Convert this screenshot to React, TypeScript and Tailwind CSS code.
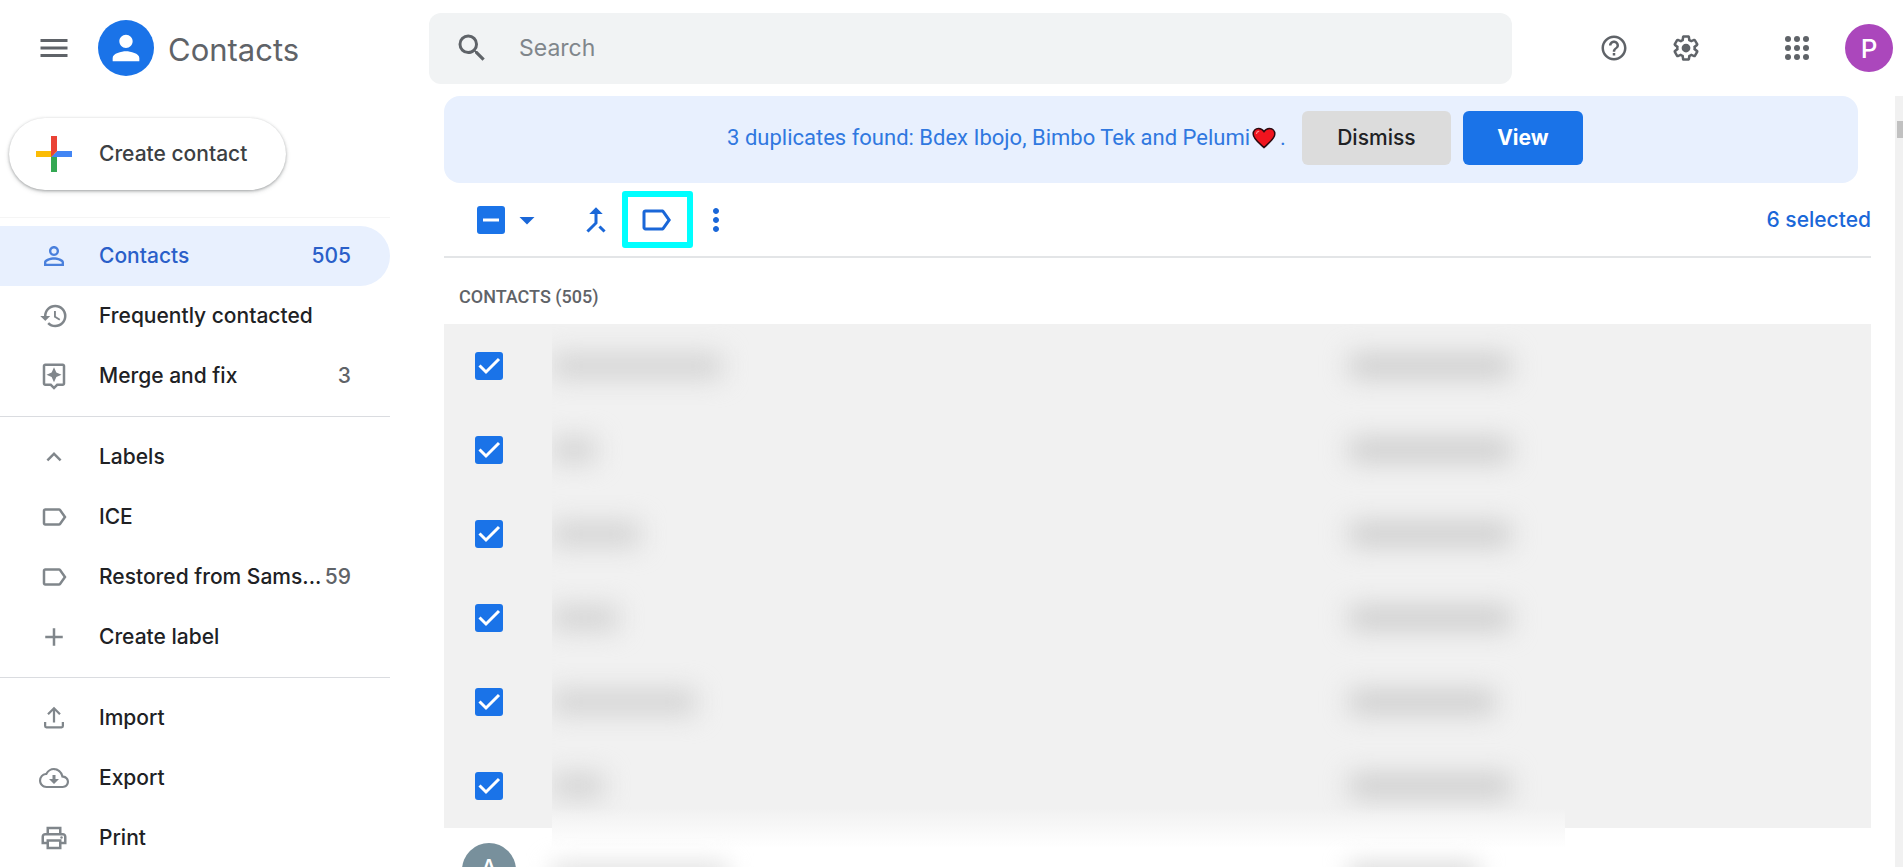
import type { ReactNode } from "react";
import {
  MdAdd,
  MdArrowDropDown,
  MdCallMerge,
  MdHelpOutline,
  MdHistory,
  MdKeyboardArrowUp,
  MdLabelOutline,
  MdMenu,
  MdMoreVert,
  MdOutlineAssistant,
  MdOutlinePrint,
  MdPerson,
  MdPersonOutline,
  MdSearch,
} from "react-icons/md";

type NavItemProps = {
  icon: ReactNode;
  label: string;
  count?: number;
  active?: boolean;
};

// widths of the hidden name / phone in each selected row
const contacts = [
  { id: 1, name: "w-[170px]", phone: "w-[162px]" },
  { id: 2, name: "w-[44px]", phone: "w-[162px]" },
  { id: 3, name: "w-[88px]", phone: "w-[162px]" },
  { id: 4, name: "w-[66px]", phone: "w-[162px]" },
  { id: 5, name: "w-[144px]", phone: "w-[146px]" },
  { id: 6, name: "w-[52px]", phone: "w-[162px]" },
];

function UploadIcon() {
  return (
    <svg viewBox="0 0 24 24" className="size-[30px]" fill="none" stroke="currentColor" strokeWidth="1.8">
      <path d="M12 15.5V4.5M7.2 9 12 4.2 16.8 9M4.9 15.2v3.2c0 .6.4 1 1 1h12.2c.6 0 1-.4 1-1v-3.2" />
    </svg>
  );
}

function CloudIcon() {
  return (
    <svg viewBox="0 0 24 24" className="size-[30px]" fill="currentColor">
      <path d="M19.35 10.04A7.49 7.49 0 0 0 12 4C9.11 4 6.6 5.64 5.35 8.04A5.994 5.994 0 0 0 0 14c0 3.31 2.69 6 6 6h13c2.76 0 5-2.24 5-5 0-2.64-2.05-4.78-4.65-4.96zM19 18.3H6c-2.4 0-4.3-1.9-4.3-4.3 0-2.2 1.6-4 3.8-4.3l.9-.1.4-.8A5.86 5.86 0 0 1 12 5.7c2.8 0 5.1 2 5.7 4.7l.3 1.2 1.2.1c1.7.1 3.1 1.6 3.1 3.3 0 1.8-1.5 3.3-3.3 3.3z" />
      <path d="M10.8 9.6h2.4v3.2H16l-4 4-4-4h2.8z" />
    </svg>
  );
}

function SettingsIcon() {
  return (
    <svg viewBox="0 0 24 24" className="size-[30px]" fill="currentColor">
      <path d="M13.85 22.25h-3.7c-.74 0-1.36-.54-1.45-1.27l-.27-1.89c-.27-.14-.53-.29-.79-.46l-1.8.72c-.7.26-1.47-.03-1.81-.65L2.2 15.53c-.35-.66-.2-1.44.36-1.88l1.53-1.19c-.01-.15-.02-.3-.02-.46 0-.15.01-.31.02-.46l-1.52-1.19c-.59-.45-.74-1.26-.37-1.88l1.85-3.19c.34-.62 1.11-.9 1.79-.63l1.81.73c.26-.17.52-.32.78-.46l.27-1.91c.09-.7.71-1.25 1.44-1.25h3.7c.74 0 1.36.54 1.45 1.27l.27 1.89c.27.14.53.29.79.46l1.8-.72c.71-.26 1.48.03 1.82.65l1.84 3.18c.36.66.2 1.44-.36 1.88l-1.52 1.19c.01.15.02.3.02.46s-.01.31-.02.46l1.52 1.19c.56.45.72 1.23.37 1.86l-1.86 3.22c-.34.62-1.11.9-1.8.63l-1.8-.72c-.26.17-.52.32-.78.46l-.27 1.91c-.1.68-.72 1.22-1.46 1.22zm-3.23-2h2.76l.37-2.55.53-.22c.44-.18.88-.44 1.34-.78l.45-.34 2.38.96 1.38-2.4-2.03-1.58.07-.56c.03-.26.06-.51.06-.78s-.03-.53-.06-.78l-.07-.56 2.03-1.58-1.39-2.4-2.39.96-.45-.35c-.42-.32-.87-.58-1.33-.77l-.52-.22-.37-2.55h-2.76l-.37 2.55-.53.21c-.44.19-.88.44-1.34.79l-.45.33-2.38-.95-1.39 2.39 2.03 1.58-.07.56a7 7 0 0 0-.06.79c0 .26.02.53.06.78l.07.56-2.03 1.58 1.38 2.4 2.39-.96.45.35c.43.33.86.58 1.33.77l.53.22.38 2.55z" />
      <circle cx="12" cy="12" r="3.5" />
    </svg>
  );
}

function AppsIcon() {
  return (
    <svg viewBox="0 0 24 24" className="size-9" fill="currentColor">
      {[6, 12, 18].map((y) => [6, 12, 18].map((x) => <circle key={`${x}-${y}`} cx={x} cy={y} r="2" />))}
    </svg>
  );
}

function PlusIcon() {
  return (
    <svg viewBox="0 0 36 36" className="size-[54px]">
      <path fill="#34A853" d="M16 16v14h4V20z" />
      <path fill="#4285F4" d="M30 16H20l-4 4h14z" />
      <path fill="#FBBC05" d="M6 16v4h10l4-4z" />
      <path fill="#EA4335" d="M20 16V6h-4v14z" />
    </svg>
  );
}

function HeartIcon() {
  return (
    <svg viewBox="0 0 24 22" role="img" aria-label="heart" className="mr-1 ml-[2px] inline-block h-[22px] w-6 align-[-4px]">
      <path
        d="M12 20.6C8 16.4 1.2 12 1.2 6.9 1.2 3.8 3.5 1.4 6.5 1.4c2.3 0 4.3 1.2 5.5 3.2 1.2-2 3.2-3.2 5.5-3.2 3 0 5.3 2.4 5.3 5.5 0 5.1-6.8 9.5-10.8 13.7z"
        fill="#f0141e"
        stroke="#2b0a10"
        strokeWidth="1.5"
      />
      <path d="M4.5 6.5c.2-1.2 1-2 2.2-2.1" fill="none" stroke="#ff8a8a" strokeWidth="1.2" strokeLinecap="round" />
    </svg>
  );
}

function NavItem({ icon, label, count, active }: NavItemProps) {
  return (
    <a
      href="#"
      className={`flex h-[60px] items-center rounded-r-full px-[39px] text-[21px] font-medium ${
        active ? "bg-[#e8f0fe] text-[#2a5fc9]" : "text-[#202124]"
      }`}
    >
      <span className={`mr-[30px] shrink-0 ${active ? "text-[#4a80dc]" : "text-[#80868b]"}`}>{icon}</span>
      <span className="flex-1 whitespace-nowrap">{label}</span>
      {count !== undefined && <span className={active ? "" : "text-[#5f6368]"}>{count}</span>}
    </a>
  );
}

function Checkbox({ label, mixed }: { label: string; mixed?: boolean }) {
  return (
    <span className="relative block size-7">
      <input
        type="checkbox"
        defaultChecked
        aria-label={label}
        className="block size-7 appearance-none rounded-[3px] bg-[#1a73e8]"
      />
      <svg
        viewBox="0 0 28 28"
        className="pointer-events-none absolute inset-0"
        fill="none"
        stroke="white"
        strokeWidth="3"
      >
        {mixed ? <path d="M6 14h16" /> : <path d="m4.5 13.5 6.5 6.5L24 7" />}
      </svg>
    </span>
  );
}

function Header() {
  return (
    <header className="flex h-24 shrink-0 items-center text-[#5f6368]">
      <div className="flex w-[429px] shrink-0 items-center pl-9">
        <button aria-label="Main menu">
          <MdMenu className="size-9" />
        </button>
        <a href="#" className="ml-[26px] flex items-center">
          <span className="flex size-14 items-center justify-center rounded-full bg-[#1a73e8]">
            <MdPerson className="size-10 text-white" />
          </span>
          <span className="ml-[14px] pt-1 text-[31px]">Contacts</span>
        </a>
      </div>

      <form className="flex h-[71px] flex-1 items-center rounded-xl bg-[#f1f3f4] pl-[25px]">
        <button type="button" aria-label="Search">
          <MdSearch className="size-9" />
        </button>
        <input
          type="text"
          placeholder="Search"
          aria-label="Search contacts"
          className="ml-[29px] flex-1 bg-transparent text-[23px] outline-none placeholder:text-[#80868b]"
        />
      </form>

      <div className="flex w-[391px] shrink-0 items-center justify-end pr-[10px]">
        <button aria-label="Help">
          <MdHelpOutline className="size-[30px]" />
        </button>
        <button aria-label="Settings" className="ml-[42px]">
          <SettingsIcon />
        </button>
        <button aria-label="Google apps" className="ml-[78px]">
          <AppsIcon />
        </button>
        <button aria-label="Account" className="ml-[30px] size-12 rounded-full bg-[#ab47bc] text-[26px] font-medium text-white">
          P
        </button>
      </div>
    </header>
  );
}

function Sidebar() {
  const icon = "size-[30px]";
  return (
    <aside className="w-[390px] shrink-0">
      <button className="mt-[22px] ml-[9px] flex h-[72px] w-[277px] items-center rounded-full pl-[18px] text-[21px] font-medium text-[#3c4043] shadow-[0_1px_3px_rgba(60,64,67,0.4),0_2px_5px_rgba(60,64,67,0.15)]">
        <PlusIcon />
        <span className="ml-[18px]">Create contact</span>
      </button>

      <nav className="mt-[27px] border-t border-[#f5f5f5] pt-2">
        <NavItem active icon={<MdPersonOutline className={icon} />} label="Contacts" count={505} />
        <NavItem icon={<MdHistory className={icon} />} label="Frequently contacted" />
        <NavItem icon={<MdOutlineAssistant className={icon} />} label="Merge and fix" count={3} />
        <hr className="my-[10px] border-[#dadce0]" />
        <NavItem icon={<MdKeyboardArrowUp className={icon} />} label="Labels" />
        <NavItem icon={<MdLabelOutline className={icon} />} label="ICE" />
        <NavItem icon={<MdLabelOutline className={icon} />} label="Restored from Sams..." count={59} />
        <NavItem icon={<MdAdd className={icon} />} label="Create label" />
        <hr className="my-[10px] border-[#dadce0]" />
        <NavItem icon={<UploadIcon />} label="Import" />
        <NavItem icon={<CloudIcon />} label="Export" />
        <NavItem icon={<MdOutlinePrint className={icon} />} label="Print" />
      </nav>
    </aside>
  );
}

function Banner() {
  return (
    <div className="mr-[13px] flex h-[87px] items-center justify-center rounded-2xl bg-[#e8f0fe] pb-1 pl-2 text-[21px]">
      <p className="mr-4 font-[Roboto,sans-serif] text-[22px] text-[#3078e0]">
        3 duplicates found: Bdex Ibojo, Bimbo Tek and Pelumi
        <HeartIcon />.
      </p>
      <button className="h-[54px] w-[149px] rounded-md bg-[#dcdcdc] font-medium text-[#202124]">Dismiss</button>
      <button className="ml-3 h-[54px] w-[120px] rounded-md bg-[#1a73e8] font-bold text-white">View</button>
    </div>
  );
}

function Toolbar() {
  return (
    <div className="flex h-[75px] items-center border-b-2 border-[#e3e5e7] pl-[33px] text-[#1a67d8]">
      <Checkbox label="Select all" mixed />
      <button aria-label="Selection options" className="ml-1">
        <MdArrowDropDown className="size-9" />
      </button>
      <button aria-label="Merge" className="ml-[33px]">
        <MdCallMerge className="size-9" />
      </button>
      {/* highlighted action */}
      <button
        aria-label="Manage labels"
        className="ml-2 flex h-[57px] w-[71px] items-center justify-center rounded-[3px] border-6 border-[#00ffff] pr-1"
      >
        <MdLabelOutline className="size-9" />
      </button>
      <button aria-label="More actions" className="ml-[5px]">
        <MdMoreVert className="size-9" />
      </button>
      <span className="ml-auto text-[21px] font-medium">6 selected</span>
    </div>
  );
}

function ContactList() {
  return (
    <>
      <h2 className="flex h-[66px] items-center pt-3 pl-[15px] font-[Roboto,sans-serif] text-lg font-medium text-[#5f6368]">
        CONTACTS (505)
      </h2>
      <table className="w-full table-fixed">
        <tbody>
          {contacts.map((c) => (
            <tr key={c.id} className="h-[84px] bg-[#f1f1f1]">
              <td className="w-[108px] pl-[31px]">
                <Checkbox label={`Contact ${c.id}`} />
              </td>
              <td className="w-[55%] overflow-hidden">
                <span className={`block h-6 bg-[#d2d2d2] blur-[13px] ${c.name}`} />
              </td>
              <td>
                <span className={`ml-3 block h-6 bg-[#cdcdcd] blur-[13px] ${c.phone}`} />
              </td>
            </tr>
          ))}
          <tr className="h-[84px]">
            <td className="pl-[18px]">
              <span className="flex size-[54px] items-center justify-center rounded-full bg-[#78909c] text-[28px] text-white">
                A
              </span>
            </td>
            <td className="relative">
              {/* soft edge under the selected rows */}
              <div className="absolute -top-5 left-0 h-10 w-[1013px] bg-linear-to-b from-[#f1f1f1]/0 via-[#f8f8f8] to-white" />
              <span className="mt-2 block h-5 w-[176px] bg-[#dcdcdc] blur-[12px]" />
            </td>
            <td>
              <span className="mt-2 ml-3 block h-5 w-[130px] bg-[#d4d4d4] blur-[12px]" />
            </td>
          </tr>
        </tbody>
      </table>
    </>
  );
}

export default function App() {
  return (
    <div className="flex h-screen flex-col overflow-hidden bg-white font-[Inter,sans-serif]">
      <Header />
      <div className="flex min-h-0 flex-1">
        <Sidebar />
        <main className="ml-[54px] min-w-0 flex-1">
          <Banner />
          <Toolbar />
          <ContactList />
        </main>
        {/* scrollbar */}
        <div className="ml-6 w-2 shrink-0 bg-[#f1f1f1] pt-[25px] pl-[2px]">
          <div className="h-[17px] bg-[#c1c1c1]" />
        </div>
      </div>
    </div>
  );
}
